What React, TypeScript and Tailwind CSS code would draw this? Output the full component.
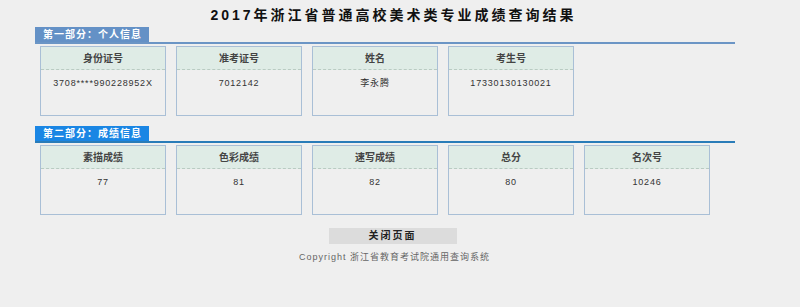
const personal = [
  { label: "身份证号", value: "3708****990228952X" },
  { label: "准考证号", value: "7012142" },
  { label: "姓名", value: "李永腾" },
  { label: "考生号", value: "17330130130021" },
];

const scores = [
  { label: "素描成绩", value: "77" },
  { label: "色彩成绩", value: "81" },
  { label: "速写成绩", value: "82" },
  { label: "总分", value: "80" },
  { label: "名次号", value: "10246" },
];

function Card({ label, value }: { label: string; value: string }) {
  return (
    <div className="w-[126px] h-[70px] border border-[#a9bfd6] flex flex-col">
      <div className="h-[23px] bg-[#dfece6] border-b border-dashed border-[#b9cbc2] flex items-center justify-center text-[10px] font-bold text-[#444]">
        {label}
      </div>
      <div className="pt-[7px] text-center text-[9px] tracking-[0.8px] text-[#333]">
        {value}
      </div>
    </div>
  );
}

function Section({
  title,
  tab,
  line,
  items,
}: {
  title: string;
  tab: string;
  line: string;
  items: { label: string; value: string }[];
}) {
  return (
    <div className="w-[700px]">
      <div className={`h-[15px] w-[114px] ${tab} text-white text-[10px] font-bold tracking-[1px] pl-[8px] leading-[15px]`}>
        {title}
      </div>
      <div className={`h-[2px] ${line}`} />
      <div className="flex gap-[10px] pl-[5px] pt-[2px]">
        {items.map((it) => (
          <Card key={it.label} {...it} />
        ))}
      </div>
    </div>
  );
}

export default function App() {
  return (
    <div
      className="w-[800px] h-[307px] bg-[#efefef] text-[#333]"
      style={{ fontFamily: '"Liberation Sans", "Noto Sans CJK SC", sans-serif' }}
    >
      <div className="ml-[35px] w-[715px] pt-[5px]">
        <h1 className="text-center text-[14px] font-bold tracking-[3px] leading-[20px] text-[#111] pl-[2px]">
          2017年浙江省普通高校美术类专业成绩查询结果
        </h1>
        <div className="pt-[2px]">
          <Section
            title="第一部分：个人信息"
            tab="bg-[#6491c6]"
            line="bg-[#6b95c5]"
            items={personal}
          />
        </div>
        <div className="pt-[10px]">
          <Section
            title="第二部分：成绩信息"
            tab="bg-[#1a86e4]"
            line="bg-[#2a7cb8]"
            items={scores}
          />
        </div>
        <div className="flex justify-center pt-[13px]">
          <button className="w-[128px] h-[16px] bg-[#dcdcdc] text-[10px] font-bold tracking-[2px] text-[#222] leading-[16px]">
            关闭页面
          </button>
        </div>
        <div className="text-center pt-[7px] text-[9px] tracking-[1px] text-[#666] pl-[4px]">
          Copyright 浙江省教育考试院通用查询系统
        </div>
      </div>
    </div>
  );
}
